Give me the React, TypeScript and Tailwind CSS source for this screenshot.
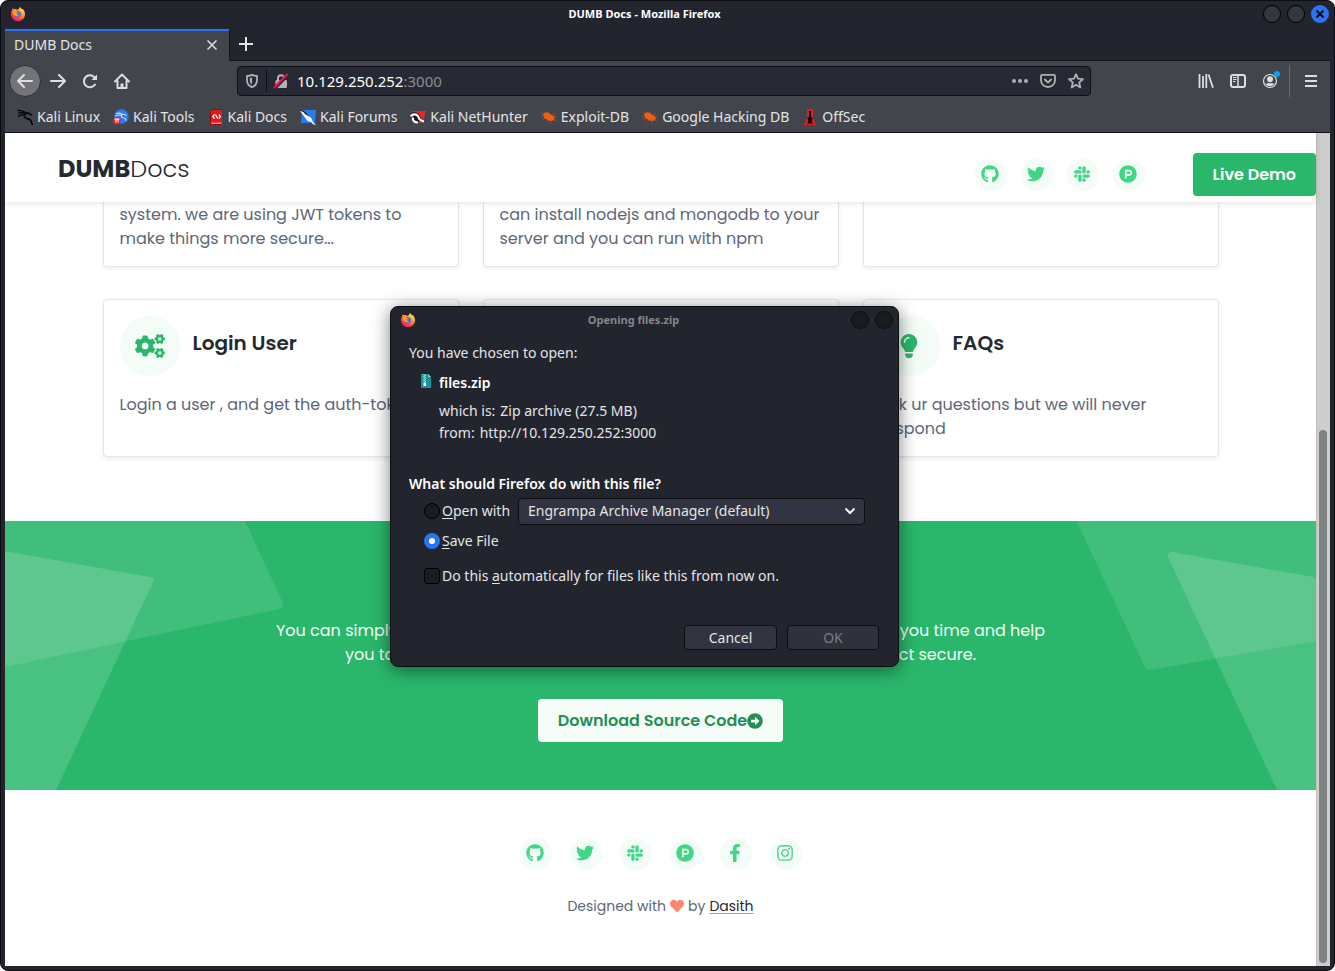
import React, { useState } from "react";
import {
  FaArrowAltCircleRight,
  FaCogs,
  FaFacebookF,
  FaGithub,
  FaHeart,
  FaInstagram,
  FaLightbulb,
  FaProductHunt,
  FaSlack,
  FaTwitter,
} from "react-icons/fa";

const FirefoxLogo = () => (
  <svg viewBox="0 0 16 16" className="h-4 w-4 shrink-0">
    <defs>
      <linearGradient id="fx" x1="0.85" y1="0.05" x2="0.3" y2="1">
        <stop offset="0" stopColor="#fff04a" />
        <stop offset="0.4" stopColor="#ff9a2e" />
        <stop offset="0.75" stopColor="#ff3d47" />
        <stop offset="1" stopColor="#e3197a" />
      </linearGradient>
    </defs>
    <path
      fill="url(#fx)"
      d="M10.2.8c.3 1.2 1 1.8 1.900 2.500l.5-.2c1.500 1.300 2.400 3 2.400 5.200A7 7 0 0 1 1 8.300c0-1.900.6-3.300 1.300-4.300l.3-1.800 1.300 1.100 1.200-.2C6.600 3.100 7.400 4 7.800 4c1.200-.6 1.400-2 2.400-3.200z"
    />
    <path fill="#3f6fe0" d="M5.200 6C6 4.800 8.500 4.400 10 5.700c1.700 1.500 1.400 4.200-.6 5-2 .8-4.200-.2-4.600-2.100.9.600 1.900.5 2.700 0l1.100-.8C7.600 7.600 6.500 7.600 6 7z" />
    <path fill="#ff9a2e" d="M3 5.500c1-.9 2.200-.7 3.200 0 .6.500 1.500.4 1.800.6-.1.800-1.500 1-1.700 1.700.2 1 1.300 1.400 2.600.9-.6 1.600-3 2-4.400.7C3.300 8.300 2.700 7 3 5.500z" />
  </svg>
);

const BackIcon = () => (
  <svg viewBox="0 0 16 16" className="h-4 w-4" fill="none" stroke="currentColor" strokeWidth="2" strokeLinecap="round" strokeLinejoin="round">
    <path d="M15 8H1.500M7 2 1 8l6 6" />
  </svg>
);

const ForwardIcon = () => (
  <svg viewBox="0 0 16 16" className="h-4 w-4" fill="none" stroke="currentColor" strokeWidth="2" strokeLinecap="round" strokeLinejoin="round">
    <path d="M1 8h13.500M9 2l6 6-6 6" />
  </svg>
);

const ReloadIcon = () => (
  <svg viewBox="0 0 16 16" className="h-4 w-4" fill="none" stroke="currentColor" strokeWidth="2" strokeLinecap="round">
    <path d="M13.400 5.800A6 6 0 1 0 13 11.500" />
    <path d="M15 1.500V7H9.500z" fill="currentColor" stroke="none" />
  </svg>
);

const HomeIcon = () => (
  <svg viewBox="0 0 16 16" className="h-4 w-4" fill="none" stroke="currentColor" strokeWidth="2" strokeLinecap="round" strokeLinejoin="round">
    <path d="M1 8.500 8 1.500l7 7M3.500 8v7h9V8" />
    <path d="M6.500 15v-4.500h3V15z" fill="currentColor" stroke="none" />
  </svg>
);

const ShieldIcon = () => (
  <svg viewBox="0 0 16 16" className="h-4 w-4">
    <path fill="none" stroke="#b1b1b3" strokeWidth="1.800" strokeLinejoin="round" d="M8 1.900c1.700.8 3.400 1 5 1.100v4c0 3.500-2 6-5 7.200C5 13 3 10.500 3 7V3c1.600-.1 3.300-.3 5-1.100z" />
    <path fill="#b1b1b3" d="M8 4.500v7C6.600 10.600 5.800 9.200 5.800 7V5C6.600 4.900 7.300 4.800 8 4.500z" />
  </svg>
);

const LockIcon = () => (
  <svg viewBox="0 0 16 16" className="h-4 w-4">
    <path fill="none" stroke="#b1b1b3" strokeWidth="2" d="M5 8V5.200a3 3 0 0 1 6 0V8" />
    <rect x="2.500" y="7" width="11.500" height="8" rx="1.200" fill="#b1b1b3" />
    <path stroke="#272935" strokeWidth="3.500" d="M2 15 14.500 2" />
    <path stroke="#e9154c" strokeWidth="2" strokeLinecap="round" d="M1.500 14.500 14 1.500" />
  </svg>
);

const PocketIcon = () => (
  <svg viewBox="0 0 16 16" className="h-4 w-4" fill="none" stroke="#b1b1b3" strokeWidth="1.800" strokeLinecap="round" strokeLinejoin="round">
    <path d="M2 1.900h12c.6 0 1 .4 1 1V7.500a7 6.500 0 0 1-14 0V2.900c0-.6.400-1 1-1z" />
    <path d="M4.800 6.500 8 9.500l3.200-3" />
  </svg>
);

const StarIcon = () => (
  <svg viewBox="0 0 16 16" className="h-4 w-4" fill="none" stroke="#b1b1b3" strokeWidth="1.800" strokeLinejoin="round">
    <path d="m8 1.200 2 4.500 4.900.500-3.700 3.200 1.100 5-4.300-2.700-4.300 2.700 1.100-5L1.100 6.200 6 5.700z" />
  </svg>
);

const LibraryIcon = () => (
  <svg viewBox="0 0 16 16" className="h-4 w-4" stroke="currentColor" strokeWidth="1.800">
    <path d="M1.500 1v14M5 3v12M8.300 1v14M10.500 1.500 15 14.800" />
  </svg>
);

const SidebarIcon = () => (
  <svg viewBox="0 0 16 16" className="h-4 w-4" fill="none" stroke="currentColor">
    <rect x="1" y="2" width="14" height="12" rx="2" strokeWidth="2" />
    <path strokeWidth="1.500" d="M8 2v12" />
    <path strokeWidth="1" d="M3 4.500h3.500M3 6.500h3.500M3 8.500h2.500" />
  </svg>
);

const AccountIcon = () => (
  <svg viewBox="0 0 16 16" className="h-4 w-4">
    <circle cx="8" cy="8" r="6.500" fill="none" stroke="currentColor" strokeWidth="1.200" />
    <circle cx="8" cy="6.200" r="3" fill="currentColor" />
    <path fill="currentColor" d="M3.500 10.500c1 .2 2 .1 2.700-.6 1 .6 2.600.6 3.600 0 .7.7 1.700.8 2.700.6-.8 1.700-2.500 2.700-4.500 2.700s-3.700-1-4.500-2.700z" />
  </svg>
);

const KaliLinuxIcon = () => (
  <svg viewBox="0 0 16 16" className="h-4 w-4 shrink-0" fill="none" stroke="#08090b" strokeLinecap="round">
    <path strokeWidth="1.500" d="M.8 1.200C4 1.300 7 2 9.800 4.200M1.800 4.200c2.500-.7 5-.6 7.500.4M1.500 7.200c2-1.300 4-1.800 6.500-1.700" />
    <path strokeWidth="1.800" d="M9.500 4.200c1.800-.2 3.300.2 4.800 1.600M8.500 5c-1.800 1.700-1.500 3.800 1 4.300 2.500.400 4.300 1.400 4.800 3.200.2.900.400 1.800.9 2.700" />
  </svg>
);

const KaliToolsIcon = () => (
  <svg viewBox="0 0 16 16" className="h-4 w-4 shrink-0">
    <circle cx="8.500" cy="7.500" r="7.200" fill="#2a7bf0" />
    <path
      fill="none"
      stroke="#c9defb"
      strokeWidth="1.100"
      strokeLinecap="round"
      d="M3 4.500c2.500-.8 4.500-.4 6.500.8M2.500 7c2-1 4-1.200 6-.9M9.500 5.300c1.600-.1 2.700.3 3.700 1.200M9 6c-1.300 1.200-.6 2.400 1 2.700 1.800.3 2.900 1.200 3.200 2.600"
    />
    <circle cx="3.800" cy="11.500" r="3.800" fill="#e8262c" />
    <path stroke="#fff" fill="none" d="M1.500 10h5M3 10v3.500M5 10v3.500" />
  </svg>
);

const KaliDocsIcon = () => (
  <svg viewBox="0 0 16 16" className="h-4 w-4 shrink-0">
    <path fill="#8f0c10" d="M2 2 4 0h10v14l-1.500 2H2z" />
    <path fill="#e01b1b" d="M3 1h11v13H3z" />
    <path fill="#f4d4d4" d="M3 13.800h11l-1 .9H3z" />
    <path fill="none" stroke="#fff" strokeWidth="1.200" d="M6.500 5.500 4.800 7.500l1.700 2M10.800 5.500l1.700 2-1.700 2M7.500 5.500l2.200 4" />
  </svg>
);

const KaliForumsIcon = () => (
  <svg viewBox="0 0 16 16" className="h-4 w-4 shrink-0">
    <path fill="#2a7bf0" d="M2 1h14l-1 13H1z" />
    <path fill="#101218" d="m0 1 4 1 5 5 3 7-4-3-4-6z" />
    <path fill="#f3f6fa" d="M0 2c2 0 4 1 5 3l5 3c2 1 2 3 3 5l3 3c-2 0-4-1-5-3-2 0-4-1-5-3L3 6z" />
  </svg>
);

const NetHunterIcon = () => (
  <svg viewBox="0 0 16 16" className="h-4 w-4 shrink-0">
    <path fill="#e3262b" d="M2 2h14l-3 11-4 1z" />
    <path fill="#15161a" d="M1 5c2-2.500 6-2.500 8.500 1l2 5-3 2-7-3z" />
    <path fill="none" stroke="#fff" strokeWidth="2.200" d="M.8 7.500c1.500-3 6.400-3 7.600.5.800 2.600 2.300 3.900 5.600 4.300M3 8.500c-.6 2.600 1 5 5 5" />
  </svg>
);

const BugIcon = () => (
  <svg viewBox="0 0 16 16" className="h-4 w-4 shrink-0">
    <path fill="#ee5d12" d="M3 4c2-1 3.500-.8 5 .3l3.500 2.200c2 .6 2.500 1.800 2 2.800.3 1.600-1 2.700-2.700 2.200-1.500 1-3.500.4-4.800-.9C4 10 2.500 8.500 2.600 7 1.800 6 2 4.800 3 4z" />
    <path stroke="#b0542a" strokeWidth="0.700" fill="none" d="M3 5 .5 3.500M2.500 7H0M4 9l-3 1.500M7 11l-2 2.500M10 12v2.500M8 4l1-2M11 6l3-2M13 7.500l3-.5M13 11l2 1.500" />
  </svg>
);

const OffSecIcon = () => (
  <svg viewBox="0 0 16 16" className="h-4 w-4 shrink-0">
    <path fill="#d61f26" d="M5 0h6v9l3.500 7h-13L5 9z" />
    <path fill="#16090b" d="M7 2h2v6l2 1-1 1v3l1 1.500H5L6 13v-3L5 9l2-1z" />
  </svg>
);

const ZipIcon = () => (
  <svg viewBox="0 0 12 15" className="h-[15px] w-3 shrink-0">
    <path fill="#16969b" d="M1 0h7l3 3v11H1z" />
    <path fill="#7fd0d2" d="M8 0l3 3H8z" />
    <path stroke="#d8f3f3" strokeWidth="1.200" strokeDasharray="1 1" d="M4 0v8M5.200 1v8" />
    <path fill="#fff" d="M3.500 8.500h2.500v3.500H3.500z" />
  </svg>
);

const bookmarks = [
  { label: "Kali Linux", icon: <KaliLinuxIcon /> },
  { label: "Kali Tools", icon: <KaliToolsIcon /> },
  { label: "Kali Docs", icon: <KaliDocsIcon /> },
  { label: "Kali Forums", icon: <KaliForumsIcon /> },
  { label: "Kali NetHunter", icon: <NetHunterIcon /> },
  { label: "Exploit-DB", icon: <BugIcon /> },
  { label: "Google Hacking DB", icon: <BugIcon /> },
  { label: "OffSec", icon: <OffSecIcon /> },
];

const socials = [
  { name: "GitHub", Icon: FaGithub },
  { name: "Twitter", Icon: FaTwitter },
  { name: "Slack", Icon: FaSlack },
  { name: "Product Hunt", Icon: FaProductHunt },
  { name: "Facebook", Icon: FaFacebookF },
  { name: "Instagram", Icon: FaInstagram },
];

const SocialLink = ({ name, Icon }: any) => (
  <a
    href="#"
    aria-label={name}
    className="flex h-8 w-8 items-center justify-center rounded-full bg-[#f3fcf6] pr-0.5 pb-0.5 text-[#3fd786]"
  >
    <Icon className="h-[18px] w-[18px]" />
  </a>
);

const ToolButton = ({ label, children }: any) => (
  <button type="button" aria-label={label} className="flex h-8 w-8 shrink-0 items-center justify-center">
    {children}
  </button>
);

const TitleBar = () => (
  <div className="flex h-7 items-center pr-px pl-[5px] pb-0.5">
    <FirefoxLogo />
    <h1 className="flex-1 text-center text-[11px] font-bold text-white">DUMB Docs - Mozilla Firefox</h1>
    <div className="flex gap-1.5">
      <button type="button" aria-label="Minimize" className="h-[18px] w-[18px] rounded-full border border-black bg-[#353843]" />
      <button type="button" aria-label="Maximize" className="h-[18px] w-[18px] rounded-full border border-black bg-[#353843]" />
      <button type="button" aria-label="Close" className="flex h-[18px] w-[18px] items-center justify-center rounded-full bg-[#2a72f6]">
        <svg viewBox="0 0 8 8" className="h-2 w-2" stroke="#0c0e14" strokeWidth="2">
          <path d="m.5.500 7 7M7.500.500l-7 7" />
        </svg>
      </button>
    </div>
  </div>
);

const BrowserChrome = () => {
  const [host, setHost] = useState("10.129.250.252");

  return (
    <>
      <TitleBar />
      <div className="flex h-8">
        <div className="flex w-56 items-center justify-between border-t-2 border-[#2a72f6] bg-[#43454c] pr-3 pb-[3px] pl-[9px]">
          <span className="text-[14px] text-[#e4e4e6]">DUMB Docs</span>
          <button type="button" aria-label="Close tab">
            <svg viewBox="0 0 10 10" className="h-2.5 w-2.5" stroke="#e0e0e2" strokeWidth="1.500">
              <path d="m.5.500 9 9M9.500.500l-9 9" />
            </svg>
          </button>
        </div>
        <div className="flex flex-1 items-center border-b border-l border-[#14151b] pb-px pl-[9px]">
          <button type="button" aria-label="New tab">
            <svg viewBox="0 0 14 14" className="h-3.5 w-3.5" stroke="#e4e4e6" strokeWidth="2">
              <path d="M7 0v14M0 7h14" />
            </svg>
          </button>
        </div>
      </div>

      <nav className="flex h-10 items-center bg-[#43454c] pr-[3px] pl-1 text-[#dededf]">
        <button
          type="button"
          aria-label="Back"
          className="mr-px flex h-8 w-8 shrink-0 items-center justify-center rounded-full border border-[#303136] bg-[#737478]"
        >
          <BackIcon />
        </button>
        <ToolButton label="Forward"><ForwardIcon /></ToolButton>
        <ToolButton label="Reload"><ReloadIcon /></ToolButton>
        <ToolButton label="Home"><HomeIcon /></ToolButton>

        <div className="mx-[99px] flex h-[30px] min-w-0 flex-1 items-center rounded border border-[#0f1015] bg-[#272935] px-1.5">
          <ShieldIcon />
          <span className="mx-1.5 h-[22px] w-px bg-[#0f1015]" />
          <LockIcon />
          <label className="ml-2 flex flex-1 items-center text-[15px] text-[#8c8d94]">
            <input
              type="text"
              aria-label="Address"
              value={host}
              onChange={(e: any) => setHost(e.target.value)}
              className="field-sizing-content bg-transparent text-white outline-none"
            />
            :3000
          </label>
          <div className="flex gap-3">
            <button type="button" aria-label="Page actions">
              <svg viewBox="0 0 16 16" className="h-4 w-4" fill="#b1b1b3">
                <circle cx="2" cy="8" r="2" />
                <circle cx="8" cy="8" r="2" />
                <circle cx="14" cy="8" r="2" />
              </svg>
            </button>
            <button type="button" aria-label="Save to Pocket"><PocketIcon /></button>
            <button type="button" aria-label="Bookmark this page"><StarIcon /></button>
          </div>
        </div>

        <ToolButton label="Library"><LibraryIcon /></ToolButton>
        <ToolButton label="Sidebars"><SidebarIcon /></ToolButton>
        <div className="relative">
          <ToolButton label="Account"><AccountIcon /></ToolButton>
          <span className="absolute top-1.5 right-1.5 h-1.5 w-1.5 rounded-full bg-[#00a8f5]" />
        </div>
        <span className="mr-[5px] ml-[3px] h-8 w-px shrink-0 bg-[#6a6b71]" />
        <ToolButton label="Menu">
          <svg viewBox="0 0 12 12" className="h-3 w-3" stroke="currentColor" strokeWidth="2">
            <path d="M0 1h12M0 6h12M0 11h12" />
          </svg>
        </ToolButton>
      </nav>

      <ul className="flex h-8 items-center gap-[13px] border-b border-[#0f1015] bg-[#43454c] px-3 text-[14px] text-[#e4e4e6]">
        {bookmarks.map((item) => (
          <li key={item.label}>
            <a href="#" className="flex items-center gap-1 whitespace-nowrap">
              {item.icon}
              {item.label}
            </a>
          </li>
        ))}
      </ul>
    </>
  );
};

const SiteHeader = () => (
  <header className="relative z-10 flex items-center bg-white pt-5 pb-1.5 pl-[53px] shadow-[0_1px_6px_rgba(0,0,0,0.12)]">
    <a href="#" className="flex-1 pb-3 text-[24px] leading-[30px] text-[#252930]">
      <b className="font-bold">DUMB</b>
      <span className="font-light">Docs</span>
    </a>
    <div className="mr-12 flex gap-3.5">
      {socials.slice(0, 4).map((s) => (
        <SocialLink key={s.name} {...s} />
      ))}
    </div>
    <a href="#" className="flex h-[43px] items-center rounded bg-[#2ab76c] px-5 font-semibold text-white">
      Live Demo
    </a>
  </header>
);

const cardStyle = "border border-[#e5e6ea] bg-white px-4 shadow-[0_2px_4px_rgba(0,0,0,0.07)]";

const Features = () => (
  <div className="mx-auto grid max-w-[1116px] grid-cols-3 gap-x-6 gap-y-8 pb-16 text-[#5d6778]">
    <div className={`rounded-b border-t-0 pt-px pb-[15px] ${cardStyle}`}>
      system. we are using JWT tokens to
      <br />
      make things more secure...
    </div>
    <div className={`rounded-b border-t-0 pt-px pb-[15px] ${cardStyle}`}>
      can install nodejs and mongodb to your
      <br />
      server and you can run with npm
    </div>
    <div className={`rounded-b border-t-0 ${cardStyle}`} />

    <div className={`rounded pt-4 pb-[15px] ${cardStyle}`}>
      <div className="mb-[17px] flex items-center gap-[13px]">
        <span className="flex h-[60px] w-[60px] items-center justify-center rounded-full bg-[#f3fcf6]">
          <FaCogs className="h-6 w-[30px] text-[#2ab76c]" />
        </span>
        <h2 className="pb-1.5 text-xl font-semibold text-[#252930]">Login User</h2>
      </div>
      <p className="whitespace-nowrap">Login a user , and get the auth-token</p>
    </div>
    <div className={`rounded ${cardStyle}`} />
    <div className={`rounded pt-4 pb-[15px] ${cardStyle}`}>
      <div className="mb-[17px] flex items-center gap-[13px]">
        <span className="flex h-[60px] w-[60px] items-center justify-center rounded-full bg-[#f3fcf6] pr-0.5">
          <FaLightbulb className="h-6 w-6 text-[#2ab76c]" />
        </span>
        <h2 className="pb-1.5 text-xl font-semibold text-[#252930]">FAQs</h2>
      </div>
      <p>
        Ask ur questions but we will never
        <br />
        respond
      </p>
    </div>
  </div>
);

const Download = () => (
  <section className="relative flex flex-col items-center bg-[#2ab76c] pt-[98px] pb-12">
    <svg viewBox="0 0 280 269" className="absolute top-0 left-0 h-[269px] w-[280px]" fill="#fff">
      <path fillOpacity="0.11" d="M0 0h240l38 82q1 5-4 6L0 146z" />
      <path fillOpacity="0.15" d="M0 32q2-1 5-1l140 25q5 1 3 5L51 269H0z" />
    </svg>
    <svg viewBox="0 0 240 269" className="absolute top-0 right-0 h-[269px] w-60" fill="#fff">
      <path fillOpacity="0.11" d="M1 0h239v120L74 149q-4 0-5-3L2 3z" />
      <path fillOpacity="0.15" d="M240 58q-3-3-8-3L96 31q-5 0-4 5l109 233h39z" />
    </svg>
    <p className="relative flex w-[769px] max-w-full justify-between whitespace-nowrap text-[#f3fcf6]">
      <span>You can simply download</span>
      <span>save you time and help</span>
    </p>
    <p className="relative mb-8 flex w-[631px] max-w-full justify-between whitespace-nowrap text-[#f3fcf6]">
      <span>you to make your</span>
      <span>project secure.</span>
    </p>
    <a
      href="#"
      className="relative flex h-[43px] items-center rounded bg-[#f6fdf9] px-5 font-semibold text-[#238f56]"
    >
      Download Source Code
      <FaArrowAltCircleRight className="h-4 w-4" />
    </a>
  </section>
);

const SiteFooter = () => (
  <footer className="flex flex-col items-center pt-12 pb-12">
    <div className="mb-[26px] flex gap-[18px]">
      {socials.map((s) => (
        <SocialLink key={s.name} {...s} />
      ))}
    </div>
    <p className="flex items-center gap-1 text-sm text-[#5d6778]">
      Designed with <FaHeart className="h-3.5 w-3.5 text-[#fb866a]" /> by
      <a href="#" className="underline decoration-[#a3a5a9] underline-offset-2 text-[#252930]">Dasith</a>
    </p>
  </footer>
);

const OpenFileDialog = () => {
  const [action, setAction] = useState("save");
  const [remember, setRemember] = useState(false);

  const radioStyle =
    "h-4 w-4 appearance-none rounded-full border border-black bg-[#1b1c21] checked:border-[5px] checked:border-[#2a72f6] checked:bg-white";

  return (
    <form
      role="dialog"
      aria-label="Opening files.zip"
      className="absolute top-[305px] left-[389px] z-20 w-[509px] rounded-lg border border-[#0c0d11] bg-[#23252e] pb-4 text-[14px] leading-[22px] text-[#e4e4e6] shadow-[0_3px_18px_rgba(0,0,0,0.5)]"
    >
      <div className="flex h-7 items-center pr-[5px] pb-0.5 pl-[9px]">
        <FirefoxLogo />
        <h2 className="flex-1 text-center text-[11px] font-bold text-[#85868b]">Opening files.zip</h2>
        <div className="flex gap-1.5">
          <button type="button" aria-label="Minimize dialog" className="h-[18px] w-[18px] rounded-full border border-[#0f1014] bg-[#1a1b1f]" />
          <button type="button" aria-label="Close dialog" className="h-[18px] w-[18px] rounded-full border border-[#0f1014] bg-[#1a1b1f]" />
        </div>
      </div>

      <div className="pt-[7px] pr-[19px] pl-[18px]">
        <p>You have chosen to open:</p>
        <div className="mt-2 flex items-start gap-[7px] pl-[11px]">
          <span className="pt-0.5"><ZipIcon /></span>
          <b className="font-semibold text-white">files.zip</b>
        </div>
        <div className="mt-1.5 pl-[30px]">
          <p className="flex gap-[5px]"><span>which is:</span><span>Zip archive (27.5 MB)</span></p>
          <p className="flex gap-[5px]"><span>from:</span><span>http://10.129.250.252:3000</span></p>
        </div>

        <p className="mt-[29px] font-semibold text-white">What should Firefox do with this file?</p>
        <div className="mt-0.5 flex h-7 items-center pl-[15px]">
          <input
            id="open-with"
            type="radio"
            name="action"
            checked={action === "open"}
            onChange={() => setAction("open")}
            className={radioStyle}
          />
          <label htmlFor="open-with" className="ml-0.5 w-[76px] whitespace-nowrap"><u className="underline-offset-2">O</u>pen with</label>
          <div className="relative">
            <select
              aria-label="Application"
              className="h-[27px] w-[347px] appearance-none rounded border border-[#0c0d11] bg-[#323541] px-[9px]"
            >
              <option>Engrampa Archive Manager (default)</option>
            </select>
            <svg viewBox="0 0 12 8" className="pointer-events-none absolute top-[9px] right-[9px] h-2 w-3" fill="none" stroke="#fff" strokeWidth="2">
              <path d="m1.500 1.500 4.500 4.500 4.500-4.500" />
            </svg>
          </div>
        </div>
        <div className="mt-[5px] flex items-center gap-0.5 pl-[15px]">
          <input
            id="save-file"
            type="radio"
            name="action"
            checked={action === "save"}
            onChange={() => setAction("save")}
            className={radioStyle}
          />
          <label htmlFor="save-file"><u className="underline-offset-2">S</u>ave File</label>
        </div>
        <div className="mt-[13px] flex items-center gap-0.5 pl-[15px]">
          <input
            id="remember"
            type="checkbox"
            checked={remember}
            onChange={(e) => setRemember(e.target.checked)}
            className="h-4 w-4 appearance-none rounded-[3px] border border-black bg-[#1b1c21] checked:bg-[#2a72f6]"
          />
          <label htmlFor="remember">Do this <u className="underline-offset-2">a</u>utomatically for files like this from now on.</label>
        </div>

        <div className="mt-[38px] flex justify-end gap-2.5">
          <button type="button" className="h-[25px] w-[93px] rounded border border-[#0c0d11] bg-[#323541]">Cancel</button>
          <button type="button" disabled className="h-[25px] w-[92px] rounded border border-[#0c0d11] bg-[#2f323d] text-[#7b7d84]">OK</button>
        </div>
      </div>
    </form>
  );
};

const App = () => {
  return (
    <div className="relative flex min-h-screen flex-col rounded-lg border border-[#0c0d11] bg-[#23252e] px-1 pb-1 font-['Noto_Sans',sans-serif]">
      <BrowserChrome />
      <div className="flex flex-1">
        <main className="min-w-0 flex-1 bg-white font-['Poppins','Inter',sans-serif]">
          <SiteHeader />
          <Features />
          <Download />
          <SiteFooter />
        </main>
        {/* scrollbar */}
        <div className="flex w-3.5 justify-center border-l border-[#c4c0bb] bg-[#cdcdcd] pt-[297px] pr-px pb-[3px]">
          <div className="w-2 rounded-full bg-[#7f8282]" />
        </div>
      </div>
      <OpenFileDialog />
    </div>
  );
};

export default App;
